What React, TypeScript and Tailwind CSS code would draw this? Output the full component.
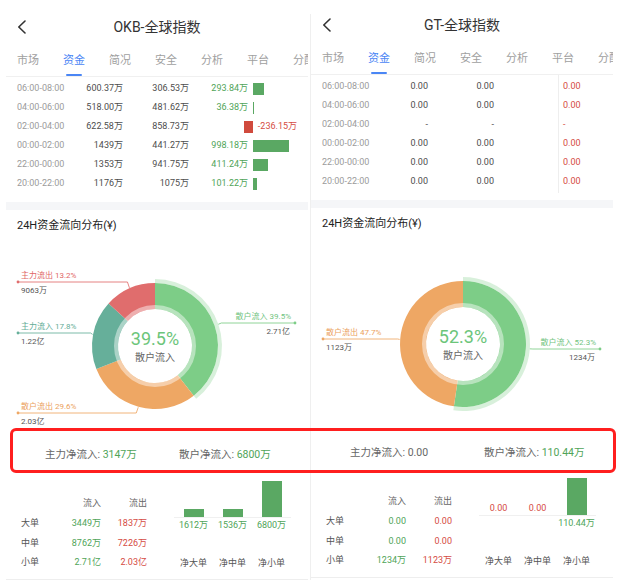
import React from "react";

type FlowRow = { time: string; a: string; b: string; net: string; v: number };
type Slice = {
  name: string;
  pct: string;
  value: string;
  color: string;
  text: string;
  ly: number;
  side: "l" | "r";
  sel?: boolean;
};
type TableRow = { name: string; inflow: string; outflow: string };
type Bar = { name: string; label: string; h: number; above?: boolean };

type PanelData = {
  title: string;
  rows: FlowRow[];
  axis: boolean;
  cx: number;
  slices: Slice[];
  center: string;
  netMain: string;
  netRetail: string;
  table: TableRow[];
  bars: Bar[];
};

const tabs = ["市场", "资金", "简况", "安全", "分析", "平台", "分配"];

const GREEN = "#7dcd87";
const ORANGE = "#eea764";
const TEAL = "#66af9a";
const RED = "#e06d6d";

const okb: PanelData = {
  title: "OKB-全球指数",
  axis: false,
  rows: [
    { time: "06:00-08:00", a: "600.37万", b: "306.53万", net: "293.84万", v: 293.84 },
    { time: "04:00-06:00", a: "518.00万", b: "481.62万", net: "36.38万", v: 36.38 },
    { time: "02:00-04:00", a: "622.58万", b: "858.73万", net: "-236.15万", v: -236.15 },
    { time: "00:00-02:00", a: "1439万", b: "441.27万", net: "998.18万", v: 998.18 },
    { time: "22:00-00:00", a: "1353万", b: "941.75万", net: "411.24万", v: 411.24 },
    { time: "20:00-22:00", a: "1176万", b: "1075万", net: "101.22万", v: 101.22 },
  ],
  cx: 149,
  slices: [
    { name: "散户流入", pct: "39.5", value: "2.71亿", color: GREEN, text: "#72c47f", ly: 89, side: "r", sel: true },
    { name: "散户流出", pct: "29.6", value: "2.03亿", color: ORANGE, text: "#eba15d", ly: 179, side: "l" },
    { name: "主力流入", pct: "17.8", value: "1.22亿", color: TEAL, text: "#5fac96", ly: 99, side: "l" },
    { name: "主力流出", pct: "13.2", value: "9063万", color: RED, text: "#df6666", ly: 48, side: "l" },
  ],
  center: "39.5%",
  netMain: "3147万",
  netRetail: "6800万",
  table: [
    { name: "大单", inflow: "3449万", outflow: "1837万" },
    { name: "中单", inflow: "8762万", outflow: "7226万" },
    { name: "小单", inflow: "2.71亿", outflow: "2.03亿" },
  ],
  bars: [
    { name: "净大单", label: "1612万", h: 8.5 },
    { name: "净中单", label: "1536万", h: 8 },
    { name: "净小单", label: "6800万", h: 36 },
  ],
};

const gt: PanelData = {
  title: "GT-全球指数",
  axis: true,
  rows: [
    { time: "06:00-08:00", a: "0.00", b: "0.00", net: "0.00", v: 0 },
    { time: "04:00-06:00", a: "0.00", b: "0.00", net: "0.00", v: 0 },
    { time: "02:00-04:00", a: "-", b: "-", net: "-", v: 0 },
    { time: "00:00-02:00", a: "0.00", b: "0.00", net: "0.00", v: 0 },
    { time: "22:00-00:00", a: "0.00", b: "0.00", net: "0.00", v: 0 },
    { time: "20:00-22:00", a: "0.00", b: "0.00", net: "0.00", v: 0 },
  ],
  cx: 152,
  slices: [
    { name: "散户流入", pct: "52.3", value: "1234万", color: GREEN, text: "#72c47f", ly: 117, side: "r", sel: true },
    { name: "散户流出", pct: "47.7", value: "1123万", color: ORANGE, text: "#eba15d", ly: 107, side: "l" },
  ],
  center: "52.3%",
  netMain: "0.00",
  netRetail: "110.44万",
  table: [
    { name: "大单", inflow: "0.00", outflow: "0.00" },
    { name: "中单", inflow: "0.00", outflow: "0.00" },
    { name: "小单", inflow: "1234万", outflow: "1123万" },
  ],
  bars: [
    { name: "净大单", label: "0.00", h: 0, above: true },
    { name: "净中单", label: "0.00", h: 0, above: true },
    { name: "净小单", label: "110.44万", h: 37 },
  ],
};

// point on circle, 0deg = top, clockwise
function pt(cx: number, cy: number, r: number, deg: number) {
  const a = ((deg - 90) * Math.PI) / 180;
  return [cx + r * Math.cos(a), cy + r * Math.sin(a)];
}

function ring(cx: number, cy: number, r0: number, r1: number, a0: number, a1: number) {
  const large = a1 - a0 > 180 ? 1 : 0;
  const [x0, y0] = pt(cx, cy, r1, a0);
  const [x1, y1] = pt(cx, cy, r1, a1);
  const [x2, y2] = pt(cx, cy, r0, a1);
  const [x3, y3] = pt(cx, cy, r0, a0);
  return `M${x0} ${y0} A${r1} ${r1} 0 ${large} 1 ${x1} ${y1} L${x2} ${y2} A${r0} ${r0} 0 ${large} 0 ${x3} ${y3} Z`;
}

function Donut({ cx, slices, center }: { cx: number; slices: Slice[]; center: string }) {
  const cy = 112;
  const total = slices.reduce((s, x) => s + parseFloat(x.pct), 0);
  let acc = 0;
  const segs = slices.map((s) => {
    const a0 = (acc / total) * 360;
    acc += parseFloat(s.pct);
    return { ...s, a0, a1: (acc / total) * 360 };
  });

  return (
    <svg width="302" height="198" className="block">
      {segs.map((s) =>
        s.sel ? <path key={"h" + s.name} d={ring(cx, cy, 63, 67, s.a0, s.a1)} fill={s.color} opacity={0.3} /> : null
      )}
      {segs.map((s) => (
        <path key={s.name} d={ring(cx, cy, 37, 63, s.a0, s.a1)} fill={s.color} />
      ))}
      <circle cx={cx} cy={cy} r={39} fill="none" stroke="#fff" strokeOpacity={0.45} strokeWidth={4} />
      {segs.map((s) => {
        const mid = (s.a0 + s.a1) / 2;
        const [px, py] = pt(cx, cy, s.sel ? 67 : 63.5, mid);
        const left = s.side === "l";
        const kx = left ? px - 2 : px + 3;
        const ex = left ? 12 : 289;
        return (
          <g key={"l" + s.name}>
            <polyline
              points={`${px},${py} ${kx},${s.ly} ${ex},${s.ly}`}
              fill="none"
              stroke={s.color}
              strokeWidth={1}
              opacity={0.85}
            />
            <circle cx={ex} cy={s.ly} r={1.4} fill={s.color} />
            <text x={left ? 15 : 285} y={s.ly - 4.5} fontSize={8} fill={s.text} textAnchor={left ? "start" : "end"}>
              {s.name} {s.pct}%
            </text>
            <text x={left ? 15 : 284} y={s.ly + 11} fontSize={8} fill="#555" textAnchor={left ? "start" : "end"}>
              {s.value}
            </text>
          </g>
        );
      })}
      <text x={cx} y={110.5} textAnchor="middle" fontSize={18} fill="#6cc57a">
        {center}
      </text>
      <text x={cx} y={126.5} textAnchor="middle" fontSize={10} fill="#666">
        散户流入
      </text>
    </svg>
  );
}

function Row({ r }: { r: FlowRow }) {
  const pos = r.v > 0;
  const w = Math.abs(r.v) * 0.036;
  return (
    <div className="flex h-[19px] items-center text-[9px] whitespace-nowrap">
      <span className="w-[56px] text-[#9b9b9b]">{r.time}</span>
      <span className="w-[50px] text-right text-[#4d4d4d]">{r.a}</span>
      <span className="w-[66px] text-right text-[#4d4d4d]">{r.b}</span>
      <div className="flex h-full w-[64px] items-center justify-end">
        {pos ? (
          <span className="pr-[5px] text-[#4fa458]">{r.net}</span>
        ) : (
          <span className="h-[12px] bg-[#d04a3d]" style={{ width: w }} />
        )}
      </div>
      <div className="flex h-full items-center">
        {pos ? (
          <span className="h-[12px] bg-[#5aa863]" style={{ width: w }} />
        ) : (
          <span className="pl-[5px] text-[#d54b43]">{r.net}</span>
        )}
      </div>
    </div>
  );
}

function Panel({ d, top }: { d: PanelData; top: string }) {
  return (
    <div className={"w-[302px] shrink-0 overflow-hidden " + top}>
      <div className="grid h-[44px] grid-cols-[40px_1fr_40px] items-center">
        <svg className="ml-[11px]" width="10" height="14" viewBox="0 0 10 14">
          <path d="M8 1 L1.8 7 L8 13" fill="none" stroke="#333" strokeWidth="1.6" strokeLinecap="round" strokeLinejoin="round" />
        </svg>
        <div className="text-center text-[14px] text-[#333]">{d.title}</div>
        <div />
      </div>

      <div className="flex h-[28px] gap-[24px] border-b border-[#f0f0f0] pl-[11px] text-[11px] whitespace-nowrap">
        {tabs.map((t, i) => (
          <div key={t} className="flex w-[22px] shrink-0 flex-col items-center">
            <span className={i === 1 ? "mt-[3px] leading-[18px] text-[#4a86f5]" : "mt-[3px] leading-[18px] text-[#a0a0a0]"}>
              {t}
            </span>
            {i === 1 && <span className="mt-[4px] h-[2px] w-[16px] rounded bg-[#4a86f5]" />}
          </div>
        ))}
      </div>

      <div className="relative px-[11px] pt-[2px] pb-[9px]">
        {d.axis && <span className="absolute top-0 left-[247px] h-[118px] w-px bg-[#eeeeee]" />}
        {d.rows.map((r) => (
          <Row key={r.time} r={r} />
        ))}
      </div>

      <div className="h-[8px] bg-[#f5f6f8]" />

      <div className="mt-[8px] px-[11px] text-[11px] leading-[16px] text-[#222]">24H资金流向分布(¥)</div>

      <Donut cx={d.cx} slices={d.slices} center={d.center} />

      <div className="flex h-[42px] pt-[15px] pl-[39px] text-[10.5px] leading-[16px] text-[#666] whitespace-nowrap">
        <span className="w-[134px]">
          主力净流入: <span className={d.netMain === "0.00" ? "text-[#666]" : "text-[#4fa458]"}>{d.netMain}</span>
        </span>
        <span>
          散户净流入: <span className="text-[#4fa458]">{d.netRetail}</span>
        </span>
      </div>

      <div className="flex h-[106px] border-b border-[#eeeeee] px-[11px] text-[9px] whitespace-nowrap">
        <div className="pt-[22px]">
          <div className="flex h-[16px] items-center text-[#666]">
            <span className="w-[40px]" />
            <span className="w-[44px] text-right">流入</span>
            <span className="w-[46px] text-right">流出</span>
          </div>
          <div className="mt-[2px]">
            {d.table.map((t) => (
              <div key={t.name} className="flex h-[19.5px] items-center">
                <span className="w-[40px] pl-[4px] text-[#555]">{t.name}</span>
                <span className="w-[44px] text-right text-[#4fa458]">{t.inflow}</span>
                <span className="w-[46px] text-right text-[#d54b43]">{t.outflow}</span>
              </div>
            ))}
          </div>
        </div>

        <div className="mt-[3px] ml-[27px] flex">
          {d.bars.map((b) => (
            <div key={b.name} className="flex w-[39px] flex-col items-center">
              <div className="flex h-[41px] w-full flex-col items-center justify-end border-b border-[#f0f0f0]">
                {b.above ? (
                  <span className="mb-[1px] leading-[12px] text-[#d54b43]">{b.label}</span>
                ) : (
                  <span className="w-[20px] bg-[#5aa863]" style={{ height: b.h }} />
                )}
              </div>
              <span className="h-[14px] leading-[14px] text-[#4fa458]">{b.above ? "" : b.label}</span>
              <span className="mt-[24px] leading-[14px] text-[#555]">{b.name}</span>
            </div>
          ))}
        </div>
      </div>
    </div>
  );
}

export default function App() {
  return (
    <div className="relative flex h-[585px] w-[622px] overflow-hidden bg-white font-['Roboto','Noto_Sans_CJK_SC',sans-serif]">
      <div className="w-[310px] shrink-0 pr-[2px] pl-[6px]">
        <Panel d={okb} top="pt-[5px]" />
      </div>
      <div className="mt-[14px] h-[566px] w-px shrink-0 bg-[#efefef]" />
      <Panel d={gt} top="pt-[3px]" />

      <div className="absolute top-[428px] left-[10px] h-[45px] w-[606px] rounded-[6px] border-[3px] border-[#ff1f1f]" />
    </div>
  );
}
